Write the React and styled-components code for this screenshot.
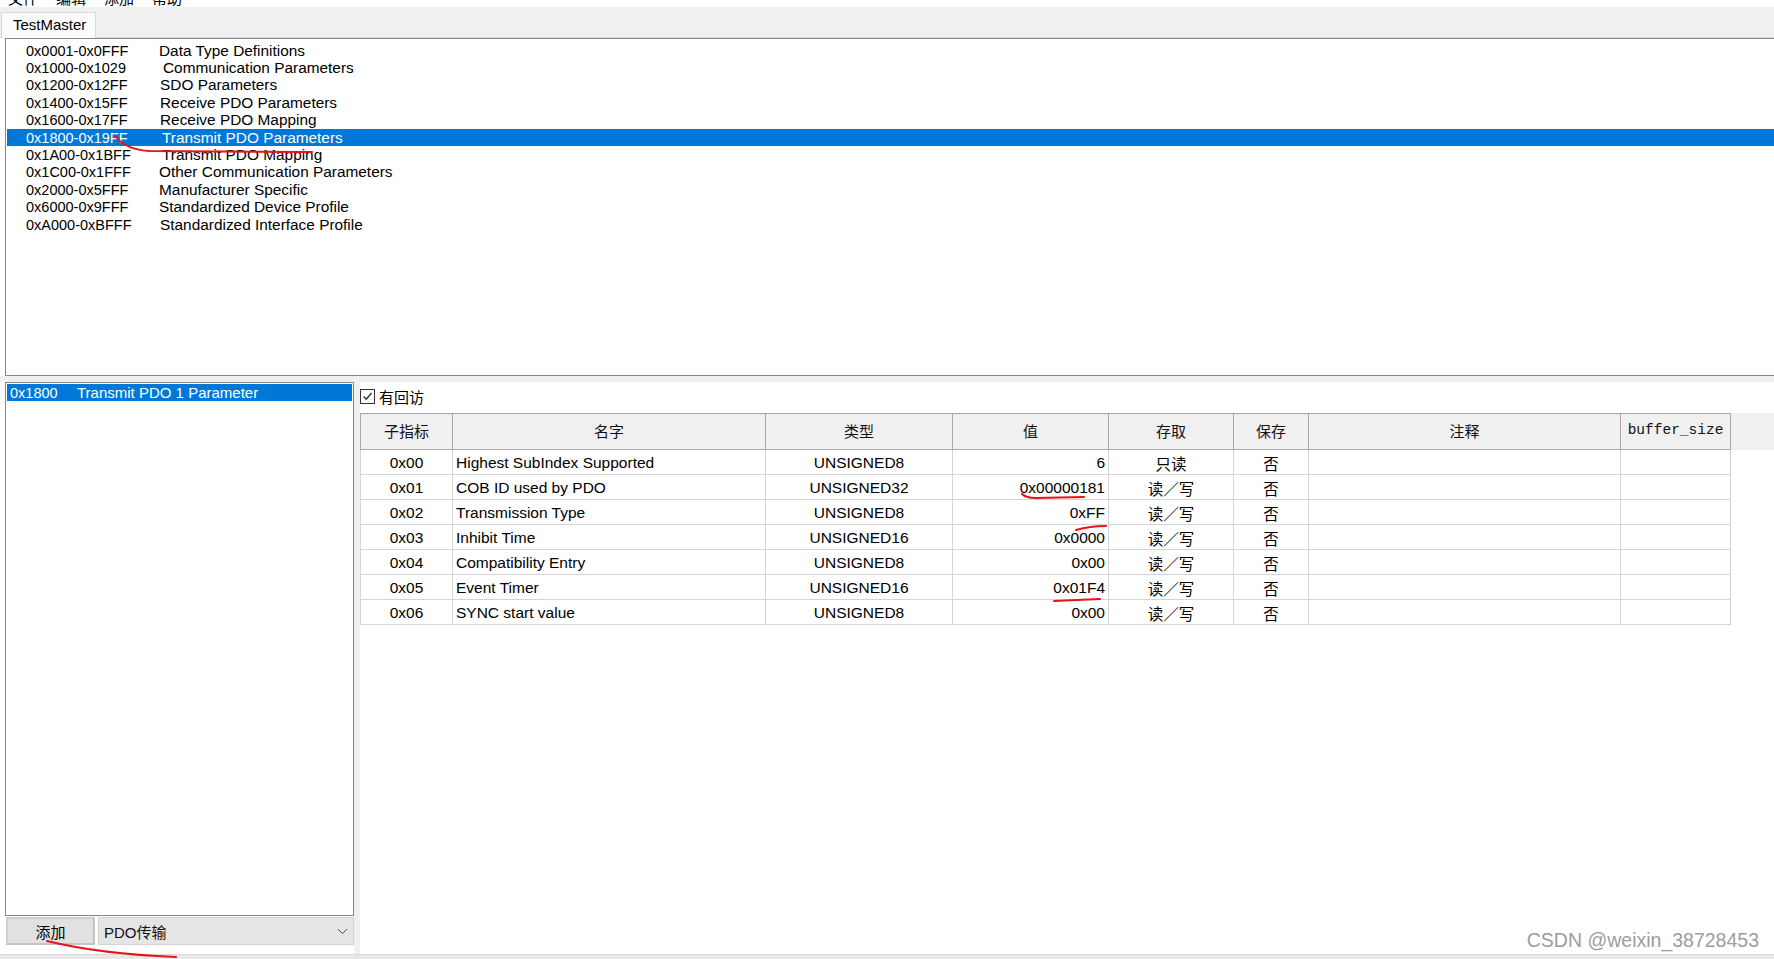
import React from 'react'
import styled, { createGlobalStyle } from 'styled-components'
import { ChevronDown } from 'lucide-react'

const GlobalStyle = createGlobalStyle`
  html, body {
    margin: 0;
    padding: 0;
    background: #fff;
  }
  body {
    font-family: 'Liberation Sans', 'Noto Sans CJK SC', sans-serif;
    color: #000;
  }
`

const menus = ['文件', '编辑', '添加', '帮助']

const indexRanges = [
  ['0x0001-0x0FFF', 'Data Type Definitions', 0],
  ['0x1000-0x1029', 'Communication Parameters', 4],
  ['0x1200-0x12FF', 'SDO Parameters', 1],
  ['0x1400-0x15FF', 'Receive PDO Parameters', 1],
  ['0x1600-0x17FF', 'Receive PDO Mapping', 1],
  ['0x1800-0x19FF', 'Transmit PDO Parameters', 3],
  ['0x1A00-0x1BFF', 'Transmit PDO Mapping', 3],
  ['0x1C00-0x1FFF', 'Other Communication Parameters', 0],
  ['0x2000-0x5FFF', 'Manufacturer Specific', 0],
  ['0x6000-0x9FFF', 'Standardized Device Profile', 0],
  ['0xA000-0xBFFF', 'Standardized Interface Profile', 1],
]

const columns = [
  { label: '子指标', w: 93, align: 'center' },
  { label: '名字', w: 313, align: 'left' },
  { label: '类型', w: 187, align: 'center' },
  { label: '值', w: 156, align: 'right' },
  { label: '存取', w: 125, align: 'center' },
  { label: '保存', w: 75, align: 'center' },
  { label: '注释', w: 312, align: 'center' },
  { label: 'buffer_size', w: 110, align: 'center', mono: true },
]

const subIndexes = [
  ['0x00', 'Highest SubIndex Supported', 'UNSIGNED8', '6', '只读', '否', '', ''],
  ['0x01', 'COB ID used by PDO', 'UNSIGNED32', '0x00000181', '读／写', '否', '', ''],
  ['0x02', 'Transmission Type', 'UNSIGNED8', '0xFF', '读／写', '否', '', ''],
  ['0x03', 'Inhibit Time', 'UNSIGNED16', '0x0000', '读／写', '否', '', ''],
  ['0x04', 'Compatibility Entry', 'UNSIGNED8', '0x00', '读／写', '否', '', ''],
  ['0x05', 'Event Timer', 'UNSIGNED16', '0x01F4', '读／写', '否', '', ''],
  ['0x06', 'SYNC start value', 'UNSIGNED8', '0x00', '读／写', '否', '', ''],
]

const Root = styled.div`
  position: relative;
  width: 1774px;
  height: 959px;
  overflow: hidden;
  display: flex;
  flex-direction: column;
  background: #fff;
`

const MenuBar = styled.div`
  height: 7px;
  display: flex;
  align-items: flex-end;
  gap: 18px;
  padding-left: 8px;
  overflow: hidden;
  flex-shrink: 0;
`

const MenuItem = styled.span`
  font-family: 'Noto Sans CJK SC', sans-serif;
  font-size: 15px;
  line-height: 18px;
  height: 18px;
  flex-shrink: 0;
`

const TabStrip = styled.div`
  height: 31px;
  box-sizing: border-box;
  background: #f0f0f0;
  border-bottom: 1px solid #dadada;
  display: flex;
  align-items: flex-end;
  padding-left: 1px;
  flex-shrink: 0;
`

const Tab = styled.div`
  width: 95px;
  height: 26px;
  box-sizing: border-box;
  background: #fbfbfb;
  border: 1px solid #d9d9d9;
  border-bottom: none;
  padding-left: 11px;
  font-size: 15px;
  line-height: 24px;
  margin-bottom: -1px;
`

const IndexList = styled.div`
  height: 338px;
  box-sizing: border-box;
  margin-left: 5px;
  border: 1px solid #828790;
  border-right: none;
  padding: 3px 0 0 1px;
  flex-shrink: 0;
`

const IndexRow = styled.div`
  display: flex;
  height: 17.4px;
  align-items: center;
  padding-left: 19px;
  font-size: 14.5px;
  white-space: nowrap;
  background: ${(p) => (p.$selected ? '#0078d7' : 'transparent')};
  color: ${(p) => (p.$selected ? '#fff' : '#000')};
`

const RangeText = styled.span`
  width: 133px;
  flex-shrink: 0;
`

const RangeName = styled.span`
  padding-left: ${(p) => p.$pad}px;
  font-size: 15.4px;
`

const HSash = styled.div`
  height: 6px;
  background: #f0f0f0;
  flex-shrink: 0;
`

const Bottom = styled.div`
  display: flex;
  height: 572px;
  flex-shrink: 0;
`

const LeftPane = styled.div`
  width: 349px;
  padding-left: 5px;
  display: flex;
  flex-direction: column;
  padding-bottom: 9px;
`

const EntryList = styled.div`
  flex: 1;
  border: 1px solid #828790;
  padding: 1px;
`

const EntryRow = styled.div`
  height: 17px;
  display: flex;
  align-items: center;
  padding-left: 3px;
  font-size: 15px;
  white-space: nowrap;
  background: ${(p) => (p.$selected ? '#0078d7' : 'transparent')};
  color: ${(p) => (p.$selected ? '#fff' : '#000')};
`

const EntryIndex = styled.span`
  width: 67px;
  flex-shrink: 0;
  font-size: 14.5px;
`

const Controls = styled.div`
  display: flex;
  gap: 3px;
  height: 28px;
  margin-top: 1px;
`

const Button = styled.div`
  width: 89px;
  margin-left: 1px;
  box-sizing: border-box;
  background: #e1e1e1;
  border: 2px solid #d0d0d0;
  border-right-color: #c4c4c4;
  border-bottom-color: #c4c4c4;
  display: flex;
  align-items: center;
  justify-content: center;
  font-family: 'Noto Sans CJK SC', sans-serif;
  font-size: 15px;
`

const Combo = styled.div`
  flex: 1;
  box-sizing: border-box;
  background: #e5e5e5;
  border: 1px solid #d3d3d3;
  display: flex;
  align-items: center;
  justify-content: space-between;
  padding: 0 2px 0 5px;
  font-size: 15px;
  color: #111;
`

const VSash = styled.div`
  width: 6px;
  background: #f0f0f0;
  flex-shrink: 0;
`

const RightPane = styled.div`
  flex: 1;
  background: #fff;
  display: flex;
  flex-direction: column;
`

const CheckRow = styled.label`
  display: flex;
  align-items: center;
  gap: 4px;
  height: 16px;
  margin-top: 6px;
  font-family: 'Noto Sans CJK SC', sans-serif;
  font-size: 15px;
`

const CheckBox = styled.span`
  width: 15px;
  height: 15px;
  box-sizing: border-box;
  border: 1px solid #333;
  background: #fff;
  display: flex;
  align-items: center;
  justify-content: center;
`

const Grid = styled.div`
  margin-top: 9px;
  display: flex;
  flex-direction: column;
`

const HeaderRow = styled.div`
  display: flex;
  background: #f0f0f0;
  height: 37px;
`

const HeaderCell = styled.div`
  width: ${(p) => p.$w}px;
  box-sizing: border-box;
  border-top: 1px solid #a8a8a8;
  border-bottom: 1px solid #a8a8a8;
  border-right: 1px solid #a8a8a8;
  border-left: ${(p) => (p.$first ? '1px solid #a8a8a8' : 'none')};
  display: flex;
  align-items: center;
  justify-content: center;
  padding-bottom: 3px;
  font-family: ${(p) =>
    p.$mono ? "'Liberation Mono', monospace" : "'Noto Sans CJK SC', sans-serif"};
  font-size: ${(p) => (p.$mono ? '14.5px' : '15px')};
  color: #111;
`

const DataRow = styled.div`
  display: flex;
  height: 25px;
`

const DataCell = styled.div`
  width: ${(p) => p.$w}px;
  box-sizing: border-box;
  border-bottom: 1px solid #d4d4d4;
  border-right: 1px solid #d4d4d4;
  border-left: ${(p) => (p.$first ? '1px solid #d4d4d4' : 'none')};
  display: flex;
  align-items: center;
  justify-content: ${(p) =>
    p.$align === 'left' ? 'flex-start' : p.$align === 'right' ? 'flex-end' : 'center'};
  padding: 1px 3px 0;
  font-size: 15.5px;
  white-space: nowrap;
`

const StatusStrip = styled.div`
  flex: 1;
  background: #e8e8e8;
  border-top: 1px solid #dcdcdc;
`

const Watermark = styled.div`
  position: absolute;
  right: 15px;
  bottom: 7px;
  font-family: 'Liberation Sans', sans-serif;
  font-size: 19.5px;
  color: #9d9d9d;
  text-shadow: 0 0 1px #fff;
`

const Marks = styled.svg`
  position: absolute;
  left: 0;
  top: 0;
  pointer-events: none;
`

export default function App() {
  return (
    <Root>
      <GlobalStyle />
      <MenuBar>
        {menus.map((m) => (
          <MenuItem key={m}>{m}</MenuItem>
        ))}
      </MenuBar>
      <TabStrip>
        <Tab>TestMaster</Tab>
      </TabStrip>

      <IndexList>
        {indexRanges.map(([range, name, pad], i) => (
          <IndexRow key={range} $selected={i === 5}>
            <RangeText>{range}</RangeText>
            <RangeName $pad={pad}>{name}</RangeName>
          </IndexRow>
        ))}
      </IndexList>

      <HSash />

      <Bottom>
        <LeftPane>
          <EntryList>
            <EntryRow $selected>
              <EntryIndex>0x1800</EntryIndex>
              Transmit PDO 1 Parameter
            </EntryRow>
          </EntryList>
          <Controls>
            <Button>添加</Button>
            <Combo>
              <span>PDO传输</span>
              <ChevronDown size={17} strokeWidth={1.4} color="#444" />
            </Combo>
          </Controls>
        </LeftPane>
        <VSash />
        <RightPane>
          <CheckRow>
            <CheckBox>
              <svg width="11" height="11" viewBox="0 0 11 11">
                <path d="M1.5 5.5 L4.3 8.3 L9.5 2" fill="none" stroke="#333" strokeWidth="1.4" />
              </svg>
            </CheckBox>
            有回访
          </CheckRow>
          <Grid>
            <HeaderRow>
              {columns.map((c, i) => (
                <HeaderCell key={c.label} $w={c.w} $first={i === 0} $mono={c.mono}>
                  {c.label}
                </HeaderCell>
              ))}
            </HeaderRow>
            {subIndexes.map((row) => (
              <DataRow key={row[0]}>
                {row.map((v, i) => (
                  <DataCell key={i} $w={columns[i].w} $align={columns[i].align} $first={i === 0}>
                    {v}
                  </DataCell>
                ))}
              </DataRow>
            ))}
          </Grid>
        </RightPane>
      </Bottom>

      <StatusStrip />
      <Watermark>CSDN @weixin_38728453</Watermark>

      {/* red hand-drawn annotations */}
      <Marks width="1774" height="959" viewBox="0 0 1774 959">
        <g fill="none" stroke="#e5141c" strokeWidth="2" strokeLinecap="round">
          <path d="M115 136 Q 126 150 150 151 L 312 152" />
          <path d="M1022 494 Q 1026 498 1036 498 L 1084 497" />
          <path d="M1076 530 Q 1090 526 1106 526" />
          <path d="M1054 601 Q 1075 600 1100 599" />
          <path d="M47 941 Q 100 954 176 957" />
        </g>
      </Marks>
    </Root>
  )
}
